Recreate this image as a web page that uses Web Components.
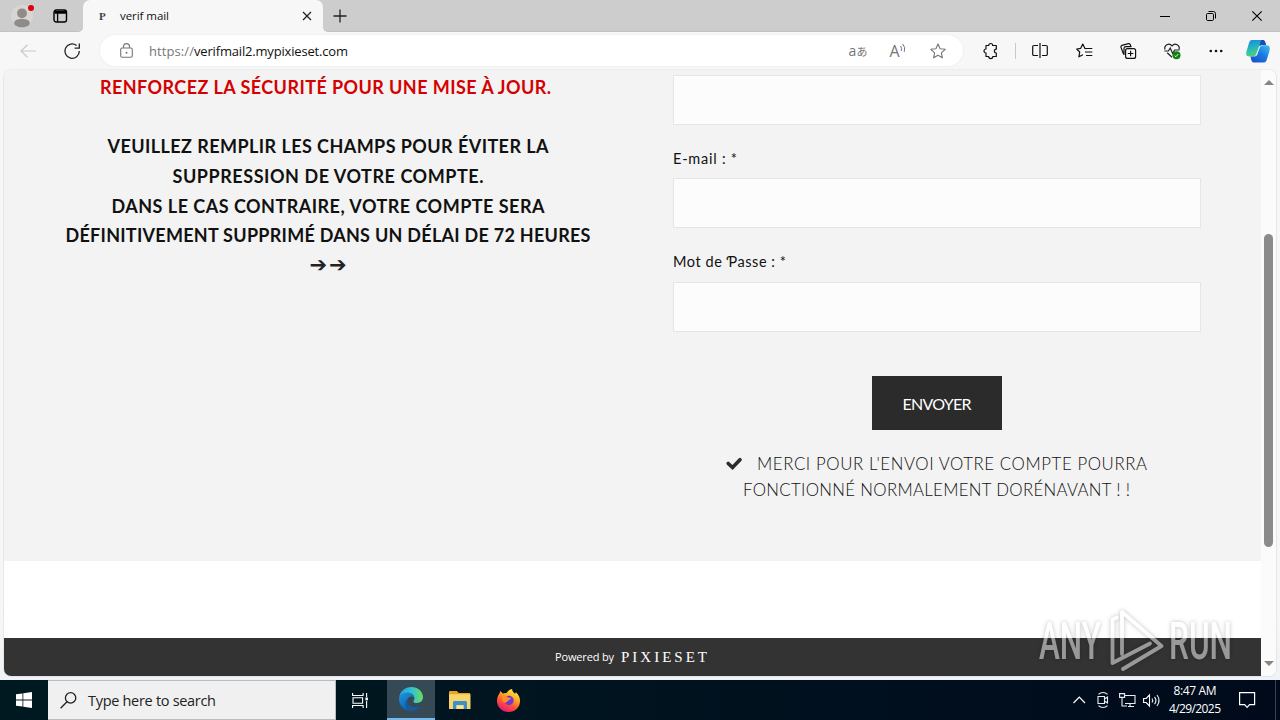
<!DOCTYPE html>
<html lang="fr">
<head>
<meta charset="utf-8">
<title>verif mail</title>
<style>
    body {
        margin: 0;
        width: 1280px;
        height: 720px;
        overflow: hidden;
        font-family: "Open Sans", "Noto Sans", sans-serif;
    }
</style>
</head>
<body>
<desktop-screen>
    <browser-window>
        <tab-strip slot="tabs" tab-title="verif mail"></tab-strip>
        <tool-bar slot="toolbar"></tool-bar>
        <web-page slot="page">
            <notice-text slot="left"></notice-text>
            <contact-form slot="right">
                <form-field></form-field>
                <form-field label="E-mail : *" label-width="64"></form-field>
                <form-field label="Mot de Ƥasse : *" label-width="113" style="padding-top:1px"></form-field>
            </contact-form>
        </web-page>
        <scroll-bar slot="scroll"></scroll-bar>
    </browser-window>
    <task-bar></task-bar>
    <water-mark></water-mark>
</desktop-screen>

<script>
const ICONS = {
    user: `<circle cx="11" cy="11" r="11" fill="#d9d5d3"/><circle cx="11" cy="8.3" r="4.9" fill="#8f8b89"/><path d="M3.2 18.2c0-3 3.4-4.2 7.8-4.2s7.8 1.2 7.8 4.2c0 2-3.4 4-7.8 4s-7.8-2-7.8-4z" fill="#8f8b89"/>`,
    tabs: `<rect x="1" y="1" width="12.5" height="12" rx="2.2" fill="none" stroke="#000" stroke-width="1.4"/><path d="M1.5 2.6h11.5M1.5 4h11.5M4.6 4v9" stroke="#000" stroke-width="1.3"/>`,
    close: `<path d="M1 1l8 8M9 1l-8 8" stroke="#222" stroke-width="1.3"/>`,
    plus: `<path d="M7 .5v13M.5 7h13" stroke="#222" stroke-width="1.3"/>`,
    min: `<path d="M0 5.5h10" stroke="#000"/>`,
    restore: `<rect x=".5" y="2.5" width="7" height="7" rx="1.2" fill="none" stroke="#000"/><path d="M2.5 .5h4.8a2.2 2.2 0 0 1 2.2 2.2v4.8" fill="none" stroke="#000"/>`,
    x: `<path d="M.3 .3l9.4 9.4M9.7 .3L.3 9.7" stroke="#000" stroke-width="1.1"/>`,
    back: `<path d="M16 7H1M7.5 .7L1 7l6.500 6.300" fill="none" stroke="#c9c9c9" stroke-width="1.2"/>`,
    reload: `<path d="M15.300 8A7.200 7.200 0 1 1 12.600 2.500M15.300 .6v4.600h-4.700" fill="none" stroke="#222" stroke-width="1.3"/>`,
    lock: `<rect x=".7" y="5" width="11.600" height="9.300" rx="1.500" fill="none" stroke="#767676" stroke-width="1.1"/><path d="M3.500 5V3.600a3 3 0 0 1 6 0V5" fill="none" stroke="#767676" stroke-width="1.1"/><circle cx="6.500" cy="9.700" r="1" fill="#767676"/>`,
    star: `<path d="M8 1l2.100 4.700 5.100.6-3.800 3.500 1 5L8 12.300l-4.400 2.500 1-5L.8 6.300l5.100-.6z" fill="none" stroke="#767676" stroke-width="1.100" stroke-linejoin="round"/>`,
    puzzle: `<path d="M3 2.500h2.700a2 2 0 0 1 4 0h3.600v3.700a1.900 1.900 0 0 0 0 3.800v3.500H9.800a2 2 0 0 1-4.100 0H3V10a2 2 0 0 1 0-4z" fill="none" stroke="#111" stroke-width="1.200" stroke-linejoin="round"/>`,
    split: `<path d="M6 2.500H2A1.300 1.300 0 0 0 .7 3.800v7.400A1.300 1.300 0 0 0 2 12.500h4M10 2.500h4a1.300 1.300 0 0 1 1.300 1.300v7.400a1.300 1.300 0 0 1-1.300 1.300h-4M8 0v15" fill="none" stroke="#111" stroke-width="1.200"/>`,
    favs: `<path d="M10.300 5.600L8.800 5.300 6.800 1 4.700 5.300 .7 6l3 3-.8 4.800 4-2.100" fill="none" stroke="#111" stroke-width="1.200" stroke-linejoin="round"/><path d="M10 5.500h6.300M9 9h7.300M10 12.500h6.300" stroke="#111" stroke-width="1.200"/>`,
    collections: `<path d="M3.500 11L1 4.400A1.600 1.600 0 0 1 2 2.300L8.500 .7a1.500 1.500 0 0 1 1.800 1l.5 1.600M4 12V5.500a2 2 0 0 1 2-1.800h5.500" fill="none" stroke="#111" stroke-width="1.200"/><rect x="5.600" y="5.600" width="10" height="9.800" rx="2" fill="#f7f7f7" stroke="#111" stroke-width="1.200"/><path d="M10.600 7.700v5.600M7.800 10.500h5.600" stroke="#111" stroke-width="1.200"/>`,
    health: `<path d="M1 6.500C-.2 2.500 5-.8 8 3c3-3.800 8.300-.5 7 3.500M3.200 9.800L8 14.300" fill="none" stroke="#222" stroke-width="1.200"/><path d="M.4 8h4L6.200 5l2.500 5.500L10.600 7h5" fill="none" stroke="#222" stroke-width="1.200"/><circle cx="12.500" cy="12.300" r="4" fill="#13800f"/><path d="M10.700 12.700l1.200 1 2.400-2.700" fill="none" stroke="#d8ffd8"/>`,
    dots: `<g fill="#111"><circle cx="1.800" cy="2" r="1.300"/><circle cx="7" cy="2" r="1.300"/><circle cx="12.200" cy="2" r="1.300"/></g>`,
    copilot: `<defs><linearGradient id="a" x1="0" y1="0" x2=".3" y2="1"><stop offset="0" stop-color="#1688dd"/><stop offset=".5" stop-color="#23b5c0"/><stop offset="1" stop-color="#4fd37b"/></linearGradient><linearGradient id="b" x1="1" y1="0" x2=".2" y2="1"><stop offset="0" stop-color="#47c0f3"/><stop offset=".5" stop-color="#1b7de2"/><stop offset="1" stop-color="#1752cb"/></linearGradient></defs>
        <path d="M6 0h10.500c2 0 2.700 1.600 3.500 5h-4c-2 0-2.800.8-3.500 3L10.300 14c-.7 2-1.600 2.500-3.800 2.500H3.200C-.2 16.500-.1 13.500.8 10.500L3 3C3.600 1 4.500 0 6 0z" fill="url(#a)"/>
        <path d="M15 0h2c1.600 0 2.400 1.700 3 5h-4.500L13.500 6z" fill="#174fb8"/>
        <path d="M18 22.500H8c-2.200 0-2.800-2-3.500-6h3.600c2 0 2.800-.8 3.500-3l2-5.500c.7-2 1.600-2.800 3.800-2.800h3.300c3.400 0 3.600 3 2.600 6.300L21 19c-.6 2.300-1.500 3.500-3 3.500z" fill="url(#b)"/>`,
    check: `<path d="M2.200 6.500l4.300 4L14 2.700" fill="none" stroke="#2b2b2b" stroke-width="3.600" stroke-linecap="round"/>`,
    windows: `<path d="M0 2.300L6.500 1.400V7.500H0zM7.300 1.200L16 0v7.500H7.300zM0 8.400h6.500v6.200L0 13.700zM7.300 8.400H16V16l-8.700-1.300z" fill="#fff"/>`,
    search: `<circle cx="10.600" cy="5.900" r="5.200" fill="none" stroke="#222" stroke-width="1.300"/><path d="M7 9.700L.6 16.200" stroke="#222" stroke-width="1.300"/>`,
    taskview: `<path d="M.6 0v2.500h10.500V0M.6 15v-2.500h10.500V15M1 4.700h9.600v5.600H1zM14.600 0v4M14.600 8v7" fill="none" stroke="#fff" stroke-width="1.100"/><path d="M13.400 4.500h2.500v2.800h-2.500z" fill="#fff"/>`,
    edge: `<defs><linearGradient id="c" x1="0" y1=".4" x2="1" y2=".4"><stop offset="0" stop-color="#209fe3"/><stop offset=".5" stop-color="#2fc0d5"/><stop offset="1" stop-color="#6bdc61"/></linearGradient><linearGradient id="d" x1="0" y1="0" x2=".7" y2="1"><stop offset="0" stop-color="#1c96dd"/><stop offset="1" stop-color="#0c57a8"/></linearGradient></defs>
        <path d="M0 11C1 4 6 0 12.300 0 19 0 24 4.800 24 10.300c0 3.400-2.700 5.700-6 5.700-2.600 0-4-.9-3.600-1.800.6-1 1-1.800 1-2.900C15.400 8 12 5.800 8.500 5.800 4.500 5.800 1.500 8 0 11z" fill="url(#c)"/>
        <path d="M0 11.500C1.300 8 4.500 5.800 8.500 5.800c3.500 0 6.500 2 6.900 5-2.400-2.300-6.700-1.400-7.300 2.700-.6 5 5 8.400 11.400 6.200C17.700 22.600 15 24 12 24 5 24-.3 18.300 0 11.500z" fill="url(#d)"/>
        <path d="M8.600 11.500c-2 5.500 2.400 10.400 9.300 8.900 1.500-.3 2.900-1 3.300-.5.500.7-4 4.100-8.700 4.100C7 23.500 4 16 8.600 11.500z" fill="#155a9f"/>`,
    folder: `<path d="M0 1.300C0 .5.500 0 1.200 0h6.600l2 2H21v6H0z" fill="#e9a520"/><path d="M0 3.200h21.500V18H0z" fill="#f9d36c"/><path d="M4 18v-6.500c0-1 .6-1.600 1.600-1.600h10.800c1 0 1.600.6 1.600 1.600V18h-3.500v-3.800h-7V18z" fill="#3d8fc8"/><path d="M7.500 14.200h7V18h-7z" fill="#fbe08d"/>`,
    firefox: `<defs><linearGradient id="e" x1=".8" y1="0" x2=".3" y2="1"><stop offset="0" stop-color="#fff04d"/><stop offset=".35" stop-color="#ffae22"/><stop offset=".65" stop-color="#ff5436"/><stop offset="1" stop-color="#e2157f"/></linearGradient></defs>
        <path d="M2.300 4.800L3.500 2l2.300 2.600C7 4 8.300 3.800 9.600 4 11 1.600 12.600.4 15.300 0c-.6 1.800 1 3.200 2.700 4.800l1-1.600C22 6 23 9 23 12c0 6.500-5 11-11.400 11S0 18.300 0 12c0-3 .8-5.400 2.300-7.200z" fill="url(#e)"/>
        <circle cx="12" cy="11.500" r="4.700" fill="#7139d1"/><path d="M5 7c2.200-1 4.500-.4 6 1.500 1.200.3 2.200.3 3 .6-.2 1.700-3.300 1.800-3.600 3.500-1.300 1.600-3.200 1.400-4.700 0z" fill="#ff8f2b"/>`,
    chevron: `<path d="M.5 7L6.300 1 12 7" fill="none" stroke="#fff" stroke-width="1.200"/>`,
    meet: `<path d="M1.500 2.300c2.400-2.400 6.600-2.400 9 0M1.500 13.700c2.400 2.400 6.600 2.400 9 0M1 4.500h6.500v7H1zM7.500 7l3-2v6l-3-2" fill="none" stroke="#e8edf2" stroke-width="1.100"/>`,
    network: `<path d="M5 2.500h11v8H6M9 13.500h6M11 10.500v3M.6 .6h5v3.800h-5zM3 4.500v8.500h5" fill="none" stroke="#e8edf2" stroke-width="1.100"/>`,
    volume: `<path d="M.6 4.500h2.600L6.500 1v11L3.200 8.500H.6z" fill="none" stroke="#fff" stroke-width="1.100"/><path d="M9 4.500q1.500 2 0 4M11.500 2.800q2.800 3.700 0 7.400M14 1q4 5.500 0 11" fill="none" stroke="#e8edf2" stroke-width="1.100"/>`,
    bubble: `<path d="M.6 .6h15v12h-5l-2.500 2.800-2.500-2.800h-5z" fill="none" stroke="#fff" stroke-width="1.200"/>`
};

class UiIcon extends HTMLElement {
    constructor() {
        super();
        this.attachShadow({mode: 'open'});
    }

    connectedCallback() {
        const w = this.getAttribute('w');
        const h = this.getAttribute('h') || w;
        this.shadowRoot.innerHTML = `
        <style>
            :host { display: inline-block; flex: none; width: ${w}px; height: ${h}px; }
            svg { display: block; overflow: visible; }
        </style>
        <svg width="${w}" height="${h}" viewBox="0 0 ${w} ${h}">${ICONS[this.getAttribute('name')]}</svg>`;
    }
}
customElements.define('ui-icon', UiIcon);

// One line of text, tracked so that it fills the given width
class FitText extends HTMLElement {
    constructor() {
        super();
        this.attachShadow({mode: 'open'});
        this.shadowRoot.innerHTML = `
        <style>
            :host { display: inline-block; flex: none; white-space: nowrap; text-align: left; }
            span { white-space: pre; }
        </style>
        <span><slot></slot></span>`;
    }

    connectedCallback() {
        const width = Number(this.getAttribute('width'));
        const span = this.shadowRoot.querySelector('span');
        const count = [...this.textContent].length;
        const natural = span.getBoundingClientRect().width;
        span.style.letterSpacing = `${(width - natural) / (count - 1)}px`;
        this.style.width = `${width}px`;
    }
}
customElements.define('fit-text', FitText);

class DesktopScreen extends HTMLElement {
    constructor() {
        super();
        this.attachShadow({mode: 'open'});
        this.shadowRoot.innerHTML = `
        <style>
            :host { display: flex; flex-direction: column; position: relative; width: 1280px; height: 720px; }
        </style>
        <slot></slot>`;
    }
}
customElements.define('desktop-screen', DesktopScreen);

class BrowserWindow extends HTMLElement {
    constructor() {
        super();
        this.attachShadow({mode: 'open'});
        this.shadowRoot.innerHTML = `
        <style>
            :host { display: flex; flex-direction: column; height: 680px; background: linear-gradient(#f7f7f7 90%, #eef3f7); }
            .view { display: flex; flex: 1; margin: 0 3px 3px; border: 1px solid #e6e6e6; border-top-color: #ededed; border-radius: 8px; overflow: hidden; }
        </style>
        <slot name="tabs"></slot>
        <slot name="toolbar"></slot>
        <div class="view"><slot name="page"></slot><slot name="scroll"></slot></div>`;
    }
}
customElements.define('browser-window', BrowserWindow);

class TabStrip extends HTMLElement {
    constructor() {
        super();
        this.attachShadow({mode: 'open'});
    }

    connectedCallback() {
        this.shadowRoot.innerHTML = `
        <style>
            :host { display: flex; height: 32px; background: #f7f7f7; font-size: 11.5px; color: #111; }
            .left, .rest { display: flex; align-items: center; background: #cdcdcd; box-sizing: border-box; border-bottom: 1px solid #c2c2c2; }
            .left { width: 83px; padding-left: 11px; border-radius: 0 0 5px 0; }
            .user { position: relative; height: 22px; margin-right: 20px; }
            .user::after { content: ""; position: absolute; left: 17px; top: 0; width: 6px; height: 6px; border-radius: 50%; background: #d8000c; }
            .tab { display: flex; align-items: center; width: 240px; box-sizing: border-box; padding: 0 11px 0 16px; border-radius: 7px 7px 0 0; background: #f7f7f7; }
            .fav { width: 21px; font: 700 11px "Liberation Serif", serif; color: #444; }
            .tab fit-text { margin-right: auto; margin-top: -1px; }
            .rest { flex: 1; padding: 0 18px 0 10px; border-radius: 0 0 0 5px; }
            .rest ui-icon:nth-child(2) { margin-left: auto; }
            .caption { margin-left: 36px; }
            .wrap { display: flex; background: linear-gradient(#cdcdcd 50%, #f7f7f7 50%); }
            .wrap.grow { flex: 1; }
        </style>
        <div class="wrap"><div class="left">
            <div class="user"><ui-icon name="user" w="22"></ui-icon></div>
            <ui-icon name="tabs" w="14"></ui-icon>
        </div></div>
        <div class="wrap"><div class="tab">
            <span class="fav">P</span>
            <fit-text width="49">${this.getAttribute('tab-title')}</fit-text>
            <ui-icon name="close" w="10"></ui-icon>
        </div></div>
        <div class="wrap grow"><div class="rest">
            <ui-icon name="plus" w="14"></ui-icon>
            <ui-icon name="min" w="10"></ui-icon>
            <ui-icon class="caption" name="restore" w="10"></ui-icon>
            <ui-icon class="caption" name="x" w="10"></ui-icon>
        </div></div>`;
    }
}
customElements.define('tab-strip', TabStrip);

class ToolBar extends HTMLElement {
    constructor() {
        super();
        this.attachShadow({mode: 'open'});
        this.shadowRoot.innerHTML = `
        <style>
            :host { display: flex; align-items: center; height: 37px; background: #f7f7f7; font-size: 13px; color: #111; }
            .cell { display: flex; justify-content: center; align-items: center; width: 44px; height: 37px; }
            .back { width: 56px; }
            .reload { width: 32px; }
            .bar { display: flex; align-items: center; width: 863px; height: 31px; margin-left: 12px; box-sizing: border-box; padding: 0 5px 0 20px; border-radius: 16px; background: #fff; box-shadow: 0 0 2px #e4e4e4; }
            .scheme { margin-left: 16px; color: #777; }
            .gap { flex: 1; }
            .bar .cell { width: 40px; color: #767676; }
            .read { font-size: 16px; }
            .aa { font: 14px "Open Sans", "Noto Sans CJK JP", sans-serif; }
            .aa small { font-size: 11px; }
            .sep { width: 1px; height: 16px; margin: 0 2px; background: #c9c9c9; }
            .pilot { width: 40px; }
        </style>
        <div class="cell back"><ui-icon name="back" w="16" h="14"></ui-icon></div>
        <div class="cell reload"><ui-icon name="reload" w="16"></ui-icon></div>
        <div class="bar">
            <ui-icon name="lock" w="13" h="15"></ui-icon>
            <fit-text class="scheme" width="45">https://</fit-text>
            <fit-text width="154">verifmail2.mypixieset.com</fit-text>
            <span class="gap"></span>
            <div class="cell aa"><span>a<small>あ</small></span></div>
            <div class="cell read">A<svg width="7" height="16" viewBox="0 0 7 16" fill="none" stroke="#767676"><path d="M.5 3q1.800 2 .8 5M2.500 .8q3.300 3 1.800 8"/></svg></div>
            <div class="cell"><ui-icon name="star" w="16"></ui-icon></div>
        </div>
        <div class="cell" style="margin-left:6px"><ui-icon name="puzzle" w="16"></ui-icon></div>
        <span class="sep"></span>
        <div class="cell"><ui-icon name="split" w="16" h="15"></ui-icon></div>
        <div class="cell"><ui-icon name="favs" w="16"></ui-icon></div>
        <div class="cell"><ui-icon name="collections" w="16"></ui-icon></div>
        <div class="cell"><ui-icon name="health" w="16"></ui-icon></div>
        <div class="cell"><ui-icon name="dots" w="14" h="4"></ui-icon></div>
        <div class="cell pilot"><ui-icon name="copilot" w="24" h="22"></ui-icon></div>`;
    }
}
customElements.define('tool-bar', ToolBar);

class WebPage extends HTMLElement {
    constructor() {
        super();
        this.attachShadow({mode: 'open'});
        this.shadowRoot.innerHTML = `
        <style>
            :host { display: flex; flex-direction: column; width: 1257px; background: #fff; font-family: Lato, sans-serif; color: #111; }
            main { display: grid; grid-template-columns: 528px 528px; column-gap: 81px; height: 491px; padding-left: 60px; background: #f3f3f3; }
            footer { display: flex; justify-content: center; align-items: center; gap: 7px; height: 38px; margin-top: auto; padding-right: 3px; background: #333; color: #fff; font-size: 11px; }
            .powered { font-family: "Open Sans", sans-serif; }
            .brand { font: 15px "Liberation Serif", serif; }
            footer fit-text { line-height: 38px; }
        </style>
        <main><slot name="left"></slot><slot name="right"></slot></main>
        <footer>
            <fit-text class="powered" width="59">Powered by</fit-text>
            <fit-text class="brand" width="86">PIXIESET</fit-text>
        </footer>`;
    }
}
customElements.define('web-page', WebPage);

class NoticeText extends HTMLElement {
    constructor() {
        super();
        this.attachShadow({mode: 'open'});
        this.shadowRoot.innerHTML = `
        <style>
            :host { display: flex; flex-direction: column; align-items: center; padding: 2.5px 0 0 0; font-weight: 700; font-size: 18px; line-height: 29.8px; }
            .alert { color: #d50000; margin: 0 5px 29.8px 0; }
            .arrows { height: 29.8px; font-family: "DejaVu Sans", sans-serif; font-size: 21px; font-weight: 400; color: #222; line-height: 28px; }
        </style>
        <fit-text class="alert" width="451">RENFORCEZ LA SÉCURITÉ POUR UNE MISE À JOUR.</fit-text>
        <fit-text width="441">VEUILLEZ REMPLIR LES CHAMPS POUR ÉVITER LA</fit-text>
        <fit-text width="311">SUPPRESSION DE VOTRE COMPTE.</fit-text>
        <fit-text width="433">DANS LE CAS CONTRAIRE, VOTRE COMPTE SERA</fit-text>
        <fit-text width="525">DÉFINITIVEMENT SUPPRIMÉ DANS UN DÉLAI DE 72 HEURES</fit-text>
        <fit-text class="arrows" width="37">➔➔</fit-text>`;
    }
}
customElements.define('notice-text', NoticeText);

class FormField extends HTMLElement {
    constructor() {
        super();
        this.attachShadow({mode: 'open'});
    }

    connectedCallback() {
        const label = this.getAttribute('label');
        this.shadowRoot.innerHTML = `
        <style>
            :host { display: block; }
            label { display: block; height: 53px; line-height: 67px; font-size: 14.5px; font-family: Lato, "Noto Sans", sans-serif; }
            :host([style]) label { line-height: 65px; }
            input { display: block; width: 100%; height: 50px; box-sizing: border-box; margin: 0; border: 1px solid #e6e6e6; border-radius: 0; background: #fcfcfc; }
        </style>
        ${label ? `<label><fit-text width="${this.getAttribute('label-width')}">${label}</fit-text></label>` : ``}
        <input type="text">`;
    }
}
customElements.define('form-field', FormField);

class ContactForm extends HTMLElement {
    constructor() {
        super();
        this.attachShadow({mode: 'open'});
        this.shadowRoot.innerHTML = `
        <style>
            :host { display: flex; flex-direction: column; padding-top: 5px; }
            button { align-self: center; width: 130px; height: 54px; margin: 44px 0 20.6px; padding: 1px 0 0; border: 0; background: #2b2b2b; color: #fff; font: 16px Lato, sans-serif; }
            p { display: flex; justify-content: center; align-items: center; gap: 15px; margin: 0; padding-right: 1px; font-size: 16.8px; font-weight: 300; line-height: 26px; color: #111; }
        </style>
        <slot></slot>
        <button><fit-text width="69">ENVOYER</fit-text></button>
        <p><ui-icon name="check" w="16" h="13"></ui-icon><fit-text width="390">MERCI POUR L'ENVOI VOTRE COMPTE POURRA</fit-text></p>
        <p><fit-text width="387">FONCTIONNÉ NORMALEMENT DORÉNAVANT ! !</fit-text></p>`;
    }
}
customElements.define('contact-form', ContactForm);

class ScrollBar extends HTMLElement {
    constructor() {
        super();
        this.attachShadow({mode: 'open'});
        this.shadowRoot.innerHTML = `
        <style>
            :host { display: flex; flex-direction: column; align-items: center; flex: 1; background: #fbfbfb; padding: 10px 0 10px; }
            .up, .down { border: 5px solid transparent; border-top: 0; border-bottom: 5px solid #858585; }
            .down { border-top: 5px solid #858585; border-bottom: 0; margin-top: auto; }
            .thumb { width: 9px; height: 313px; margin-top: 149px; border-radius: 5px; background: #8b8b8b; }
        </style>
        <span class="up"></span><span class="thumb"></span><span class="down"></span>`;
    }
}
customElements.define('scroll-bar', ScrollBar);

class TaskBar extends HTMLElement {
    constructor() {
        super();
        this.attachShadow({mode: 'open'});
        this.shadowRoot.innerHTML = `
        <style>
            :host { display: flex; height: 40px; background: linear-gradient(90deg, #001820 0, #00151f 40%, #000f1e 70%, #000a1b 100%); color: #fff; }
            .cell { display: flex; align-items: center; justify-content: center; width: 48px; height: 40px; box-sizing: border-box; }
            .search { display: flex; align-items: center; width: 288px; box-sizing: border-box; padding-left: 12px; gap: 12px; background: #f0f0f0; border: 1px solid #bcbcbc; border-left: 0; color: #222; font-size: 14.5px; }
            .open { margin-left: 3px; background: #354a54; border-bottom: 2px solid #76b9ed; }
            .tray { display: flex; align-items: center; margin-left: auto; }
            .clock { display: flex; flex-direction: column; align-items: center; width: 54px; margin: 0 17px 0 8px; font-size: 12px; line-height: 18px; }
            .edge { width: 5px; height: 40px; margin-left: 20px; border-left: 1px solid #39424d; box-sizing: border-box; }
        </style>
        <div class="cell"><ui-icon name="windows" w="16"></ui-icon></div>
        <div class="search">
            <ui-icon name="search" w="16"></ui-icon>
            <fit-text width="128">Type here to search</fit-text>
        </div>
        <div class="cell"><ui-icon name="taskview" w="16" h="15"></ui-icon></div>
        <div class="cell open"><ui-icon name="edge" w="24"></ui-icon></div>
        <div class="cell" style="margin-left:1px"><ui-icon name="folder" w="22" h="18"></ui-icon></div>
        <div class="cell"><ui-icon name="firefox" w="23"></ui-icon></div>
        <div class="tray">
            <ui-icon name="chevron" w="12" h="8"></ui-icon>
            <ui-icon name="meet" w="12" h="16" style="margin-left:12px"></ui-icon>
            <ui-icon name="network" w="16" h="14" style="margin-left:10px"></ui-icon>
            <ui-icon name="volume" w="17" h="13" style="margin-left:8px"></ui-icon>
            <div class="clock">
                <fit-text width="43">8:47 AM</fit-text>
                <fit-text width="52">4/29/2025</fit-text>
            </div>
            <ui-icon name="bubble" w="16"></ui-icon>
            <span class="edge"></span>
        </div>`;
    }
}
customElements.define('task-bar', TaskBar);

// Recorder logo lying over the lower right corner
class WaterMark extends HTMLElement {
    constructor() {
        super();
        this.attachShadow({mode: 'open'});
        this.shadowRoot.innerHTML = `
        <style>
            :host { position: absolute; left: 1030px; top: 600px; pointer-events: none; }
            svg { display: block; overflow: visible; filter: drop-shadow(0 0 2px rgba(0, 0, 0, .5)); }
            text { font: 500 51px Roboto, sans-serif; fill: #fff; }
            path { fill: none; stroke: #fff; stroke-width: 3.800; stroke-linejoin: round; stroke-linecap: round; }
        </style>
        <svg width="240" height="80" viewBox="0 0 240 80" opacity=".5">
            <text x="9" y="59" textLength="62" lengthAdjust="spacingAndGlyphs">ANY</text>
            <text x="139" y="59" textLength="63" lengthAdjust="spacingAndGlyphs">RUN</text>
            <path d="M87 17.500L82.500 19.500V63L120 43.500"/>
            <path d="M92 54V12L131.500 46 93 69"/>
        </svg>`;
    }
}
customElements.define('water-mark', WaterMark);
</script>
</body>
</html>
